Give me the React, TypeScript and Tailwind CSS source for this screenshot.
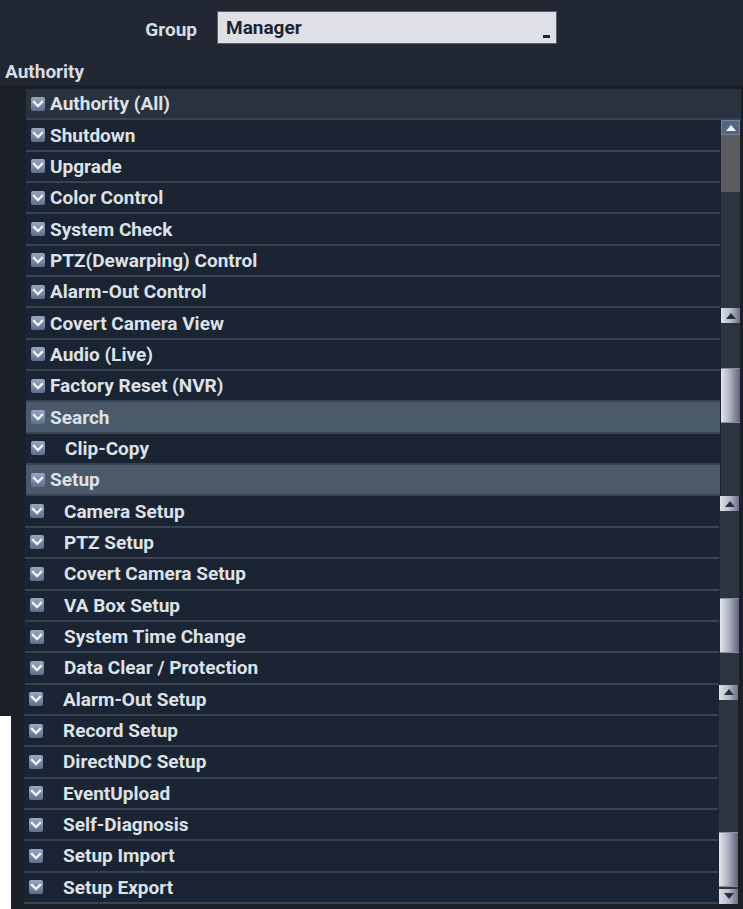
import React from "react";

type Row = {
  label: string;
  kind?: "all" | "group" | "item";
  indent?: boolean;
};

type Bar = {
  arrow: "blue" | "light";
  thumbTop: number;
  thumbHeight: number;
  thumbGray?: boolean;
  down?: boolean;
};

const segA: Row[] = [
  { label: "Shutdown" },
  { label: "Upgrade" },
  { label: "Color Control" },
  { label: "System Check" },
  { label: "PTZ(Dewarping) Control" },
  { label: "Alarm-Out Control" },
];

const segB: Row[] = [
  { label: "Covert Camera View" },
  { label: "Audio (Live)" },
  { label: "Factory Reset (NVR)" },
  { label: "Search", kind: "group" },
  { label: "Clip-Copy", indent: true },
  { label: "Setup", kind: "group" },
];

const segC: Row[] = [
  { label: "Camera Setup", indent: true },
  { label: "PTZ Setup", indent: true },
  { label: "Covert Camera Setup", indent: true },
  { label: "VA Box Setup", indent: true },
  { label: "System Time Change", indent: true },
  { label: "Data Clear / Protection", indent: true },
];

const segD: Row[] = [
  { label: "Alarm-Out Setup", indent: true },
  { label: "Record Setup", indent: true },
  { label: "DirectNDC Setup", indent: true },
  { label: "EventUpload", indent: true },
  { label: "Self-Diagnosis", indent: true },
  { label: "Setup Import", indent: true },
  { label: "Setup Export", indent: true },
];

function Check() {
  return (
    <span className="flex h-[14px] w-[14px] shrink-0 items-center justify-center rounded-[2px] bg-gradient-to-b from-[#97a6c2] to-[#5e6e8d]">
      <svg width="14" height="14" viewBox="0 0 14 14">
        <path d="M3 5 L7 9 L11 5" fill="none" stroke="#f2f4f8" strokeWidth="2.3" strokeLinecap="square" />
      </svg>
    </span>
  );
}

function ListRow({ row }: { row: Row }) {
  const bg =
    row.kind === "group" ? "bg-[#4b5a6b]" : row.kind === "all" ? "bg-[#29323e]" : "bg-[#1b2432]";
  return (
    <div className={`flex h-[31.35px] items-center border-b-2 border-[#3a4351] pl-[5px] ${bg}`}>
      <Check />
      <span className={`${row.indent ? "ml-[20px]" : "ml-[5px]"} text-[19px] font-bold leading-none text-[#dde1e8]`}>
        {row.label}
      </span>
    </div>
  );
}

function Arrow({ style, down }: { style: "blue" | "light"; down?: boolean }) {
  const box =
    style === "blue"
      ? "bg-[#56667f] border border-[#7081a0]"
      : "bg-gradient-to-r from-[#dde0e8] via-[#b8bccb] to-[#6c7088]";
  const fill = style === "blue" ? "#eef1f6" : "#283040";
  return (
    <div className={`flex h-[15px] items-center justify-center ${box}`}>
      <svg width="12" height="8" viewBox="0 0 12 8">
        <path d={down ? "M1 1 L11 1 L6 7 Z" : "M1 7 L11 7 L6 1 Z"} fill={fill} />
      </svg>
    </div>
  );
}

function Scroll({ bar }: { bar: Bar }) {
  return (
    <div className="flex w-[19px] shrink-0 flex-col bg-[#2b3542]">
      <Arrow style={bar.arrow} />
      <div className="relative flex-1">
        <div
          className={`absolute left-0 right-0 ${
            bar.thumbGray
              ? "bg-[#5d5d5f]"
              : "bg-gradient-to-r from-[#e4e6ee] via-[#a9adbe] to-[#5f6379] border-y border-[#8a8ea2]"
          }`}
          style={{ top: bar.thumbTop, height: bar.thumbHeight }}
        />
      </div>
      {bar.down && <Arrow style={bar.arrow} down />}
    </div>
  );
}

function Segment({ rows, bar, listWidth }: { rows: Row[]; bar: Bar; listWidth: string }) {
  return (
    <div className="flex">
      <div className={`flex flex-col ${listWidth}`}>
        {rows.map((r) => (
          <ListRow key={r.label} row={r} />
        ))}
      </div>
      <div className="w-px bg-[#1b2432]" />
      <Scroll bar={bar} />
    </div>
  );
}

export default function App() {
  return (
    <div
      className="flex h-[909px] w-[743px] flex-col overflow-hidden bg-[#222833]"
      style={{ fontFamily: "Roboto, 'Liberation Sans', sans-serif" }}
    >
      {/* group picker */}
      <div className="flex h-[55px] items-center">
        <span className="w-[197px] pt-[5px] text-right text-[19px] font-bold text-[#d8dce4]">Group</span>
        <div className="relative ml-[20px] flex h-[33px] w-[340px] items-center border border-[#5a616d] bg-[#dfe0e5] pl-[8px] pt-[2px]">
          <span className="text-[19px] font-bold text-[#1e2430]">Manager</span>
          <span className="absolute bottom-[5px] right-[6px] h-[3px] w-[7px] bg-[#1e2430]" />
        </div>
      </div>

      <div className="flex h-[30px] items-center pl-[5px] pt-[4px] text-[19px] font-bold text-[#d8dce4]">Authority</div>
      <div className="h-[4px] bg-[#1b1f27]" />

      {/* authority list */}
      <div className="flex flex-col bg-[#1b1f27]">
        <div className="ml-[26px] flex flex-col pr-[2px]">
          <ListRow row={{ label: "Authority (All)", kind: "all" }} />
          <Segment
            rows={segA}
            listWidth="w-[694px]"
            bar={{ arrow: "blue", thumbTop: 0, thumbHeight: 57, thumbGray: true }}
          />
          <Segment rows={segB} listWidth="w-[694px]" bar={{ arrow: "light", thumbTop: 45, thumbHeight: 55 }} />
        </div>
        <div className="ml-[25px] flex pr-[4px]">
          <Segment rows={segC} listWidth="w-[694px]" bar={{ arrow: "light", thumbTop: 87, thumbHeight: 55 }} />
        </div>
      </div>

      <div className="flex flex-1">
        <div className="flex w-[11px] flex-col">
          <div className="h-[31px] bg-[#1b1f27]" />
          <div className="flex-1 bg-white" />
        </div>
        <div className="flex flex-1 flex-col bg-[#1b1f27]">
          <div className="ml-[13px] flex pr-[5px]">
            <Segment
              rows={segD}
              listWidth="w-[694px]"
              bar={{ arrow: "light", thumbTop: 132, thumbHeight: 55, down: true }}
            />
          </div>
        </div>
      </div>
    </div>
  );
}
